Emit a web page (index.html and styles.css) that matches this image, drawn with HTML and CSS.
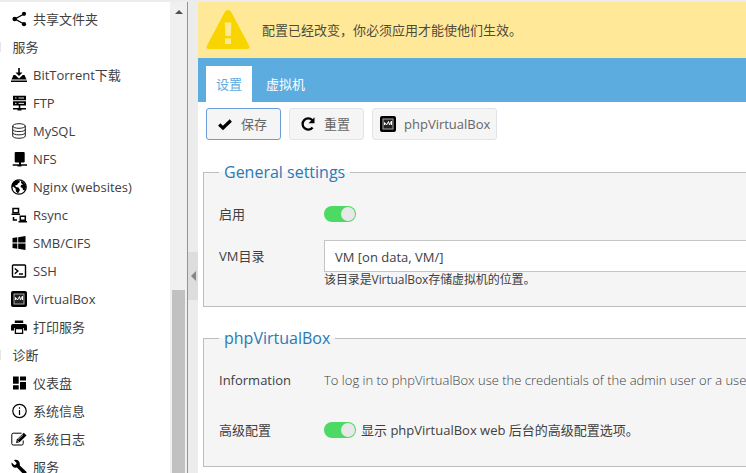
FILE: index.html
```html
<!DOCTYPE html>
<html lang="zh-CN">
<head>
<meta charset="utf-8">
<title>VirtualBox</title>
<link rel="stylesheet" href="styles.css">
</head>
<body>
<svg class="defs" aria-hidden="true">
  <symbol id="vbox" viewBox="0 0 16 16"><rect width="16" height="16" rx="2"/><rect x="3" y="3" width="10" height="10" fill="#222" stroke="#aaa"/><path d="M4.500 9V6.500L6.500 9L8.500 5.500L9.500 9L11.500 5V9" fill="none" stroke="#fff" stroke-width="1"/></symbol>
</svg>
<div class="app">
  <nav class="sidebar">
    <ul class="tree">
      <li class="leaf"><svg viewBox="0 0 16 16"><path d="M13 3L4 8L13 13" fill="none" stroke="#000" stroke-width="1.400"/><circle cx="13" cy="2.800" r="2.100"/><circle cx="3.700" cy="8" r="2.300"/><circle cx="13" cy="13.200" r="2.100"/></svg>共享文件夹</li>
      <li class="group">服务</li>
      <li class="leaf"><svg viewBox="0 0 16 16"><path d="M7.200 1h1.600v4.500h2.700L8 9L4.500 5.500h2.700zM2.500 8h1.700L8 11.500L11.800 8h1.700L15.500 12.500H.5zM0 13.400h16V15H0z"/></svg>BitTorrent下载</li>
      <li class="leaf"><svg viewBox="0 0 16 16"><path d="M2 .8h13v4.400H2zM2 6.200h13v4.400H2zM7.700 10h1.600v3H15v1.500h-4.500v1h-4v-1H2V13h5.700z"/><path d="M4 3h1.500M4 8.400h1.500M7.500 3H13M7.500 8.400H13" stroke="#fff" stroke-width=".9"/></svg>FTP</li>
      <li class="leaf"><svg viewBox="0 0 16 16" class="thin"><ellipse cx="8" cy="3" rx="6.300" ry="2.300"/><path d="M1.700 3v10c0 3 12.600 3 12.600 0V3M1.700 6.300c0 3 12.600 3 12.600 0M1.700 9.600c0 3 12.600 3 12.600 0"/></svg>MySQL</li>
      <li class="leaf"><svg viewBox="0 0 16 16"><rect x="3.700" y="1" width="10" height="10.500" rx="1"/><path d="M8 11h2v2.300h6v1.400h-5.500v.8h-4v-.8H1.700v-1.400H8z"/></svg>NFS</li>
      <li class="leaf"><svg viewBox="0 0 16 16"><circle cx="8" cy="8" r="7.200" fill="#fff" stroke="#000" stroke-width="1.300"/><path d="M2 3.500L5 1.200l3 .3 1 1.500-2 1.500-1 1.500-2 .5 1 1.500 2.500.5L9 11l-2 3.500-2-2-.5-3L2 7.500.9 8.500 1 6zM10 2l3 1.500 2 4-1 4-2-.5-.5-2L9.500 8l.5-2 2-.5L10 4z"/></svg>Nginx (websites)</li>
      <li class="leaf"><svg viewBox="0 0 16 16"><path d="M2 1.500h5.500v4.300H2zM9.300 9.200h5v4.100h-5zM2.500 10v3h3.500" fill="none" stroke="#000" stroke-width="1.500"/><path d="M.5 6.500H9v1.600H.5zM7.500 13.900H16v1.600H7.500z"/></svg>Rsync</li>
      <li class="leaf"><svg viewBox="0 0 16 16"><path d="M1.500 3L6.300 2.300v5.200H1.500zM7.200 2.200L14.500 1v6.500H7.200zM1.500 8.500h4.800v5.200L1.500 13zM7.200 8.500h7.300V15l-7.300-1.200z"/></svg>SMB/CIFS</li>
      <li class="leaf"><svg viewBox="0 0 16 16"><rect x="1.500" y="2" width="13" height="12" rx=".8" fill="none" stroke="#000" stroke-width="1.400"/><path d="M3.800 5.500L6.800 8L3.800 10.700M8 11h4" fill="none" stroke="#000" stroke-width="1.500"/></svg>SSH</li>
      <li class="leaf"><svg><use href="#vbox"/></svg>VirtualBox</li>
      <li class="leaf"><svg viewBox="0 0 16 16"><path d="M3.800 1.500h8.400v2.600H3.800zM2 5h12a2 2 0 0 1 2 2v4.500h-3V9H3v2.500H0V7a2 2 0 0 1 2-2z"/><path d="M4.400 9.500h7.200v4.800H4.400z" fill="#fff" stroke="#000" stroke-width="1.300"/></svg>打印服务</li>
      <li class="group">诊断</li>
      <li class="leaf"><svg viewBox="0 0 16 16"><path d="M2 1.500h5.700v7.200H2zM9 1.500h6v4H9zM2 10.200h5.700v4.300H2zM9 7h6v7.500H9z"/></svg>仪表盘</li>
      <li class="leaf"><svg viewBox="0 0 16 16"><circle cx="8.500" cy="8" r="6.700" fill="none" stroke="#000" stroke-width="1.200"/><path d="M7.900 4.200h1.200v1.500H7.900zM7.900 7h1.200v5H7.900z"/></svg>系统信息</li>
      <li class="leaf"><svg viewBox="0 0 16 16"><path d="M10.500 2.200H2.200Q.8 2.200.8 3.600v9q0 1.400 1.400 1.400h8.600q1.400 0 1.400-1.400V9.500" fill="none" stroke="#000"/><path d="M12.800 1.800L15.500 4.500L8.500 11.200L5 12L5.800 8.500z"/><path d="M7 8.500L12 3.700M6.300 9.500l1.500 1.500" stroke="#fff" stroke-width=".7"/></svg>系统日志</li>
      <li class="leaf"><svg viewBox="0 0 16 16"><path d="M3 1.200L5.600 4 5 5.500 3.300 6 .7 3.500C-.2 6.500 2.500 9.500 6 8.600L12.500 15.200q1.500 1 2.600-.2 1-1.200 0-2.400L8.800 6.500C9.500 3 6.500-.2 3 1.200z"/></svg>服务</li>
    </ul>
    <div class="scrollbar"><span class="arrow-up"></span><span class="thumb"></span></div>
  </nav>
  <div class="splitter"><span class="collapse"></span></div>
  <main class="main">
    <div class="notice">
      <svg viewBox="0 0 44 42"><path d="M22 2Q24 2 25.200 4L43 37.500Q44.500 41 41 41H3Q-.5 41 1 37.500L18.800 4Q20 2 22 2z" fill="#f8d500"/><path d="M18.800 14.500h6.600l-.7 13.500h-5.200zM19 30.500h6V36h-6z" fill="#ffe999"/></svg>
      <span>配置已经改变，你必须应用才能使他们生效。</span>
    </div>
    <div class="tabs"><span class="tab active">设置</span><span class="tab">虚拟机</span></div>
    <div class="toolbar">
      <button class="btn focus"><svg viewBox="0 0 16 16"><path d="M2.200 8.500L6 12L13.800 4.500" fill="none" stroke="#000" stroke-width="3.200"/></svg>保存</button>
      <button class="btn reset"><svg viewBox="0 0 16 16"><path d="M12.300 4.200A5.600 5.600 0 1 0 12.600 11.500" fill="none" stroke="#000" stroke-width="2.300"/><path d="M14.500 1.200V7.300H8.500z"/></svg>重置</button>
      <button class="btn php"><svg><use href="#vbox"/></svg>phpVirtualBox</button>
    </div>
    <fieldset class="general">
      <legend>General settings</legend>
      <div class="row"><label>启用</label><span class="switch"></span></div>
      <div class="row dir"><label>VM目录</label><div class="field"><div class="input">VM [on data, VM/]</div><div class="hint">该目录是VirtualBox存储虚拟机的位置。</div></div></div>
    </fieldset>
    <fieldset class="php-box">
      <legend>phpVirtualBox</legend>
      <div class="row"><label>Information</label><span class="info">To log in to phpVirtualBox use the credentials of the admin user or a use</span></div>
      <div class="row advanced"><label>高级配置</label><span class="switch"></span><span class="desc">显示 phpVirtualBox web 后台的高级配置选项。</span></div>
    </fieldset>
  </main>
</div>
</body>
</html>
```

FILE: styles.css
```css
* { box-sizing: border-box; }
body { margin: 0; overflow: hidden; background: #ececec; color: #404040; font: 13px/20px "Open Sans", "Noto Sans CJK SC", sans-serif; }
.defs { display: none; }
.app { display: flex; width: 746px; height: 473px; padding-top: 2px; overflow: hidden; }
.sidebar { display: flex; flex: 0 0 188px; height: 471px; background: #fff; border-right: 1px solid #5fa2ce; overflow: hidden; }
.tree { flex: 1; margin: 0; padding: 3px 0 0; list-style: none; }
.tree li { display: flex; align-items: center; height: 28px; white-space: nowrap; }
.tree .leaf { padding-left: 11px; }
.leaf svg { width: 16px; height: 16px; margin-right: 6px; flex: none; }
.thin { fill: none; stroke: #222; stroke-width: 1; }
.tree .group { padding-left: 12.500px; background: linear-gradient(#e6e6e6, #e6e6e6) 0 50% / 1px 10px no-repeat; }
.scrollbar { display: flex; flex-direction: column; align-items: center; width: 17px; background: #f0f0f0; }
.arrow-up { margin-top: 8px; border: 4px solid transparent; border-top: 0; border-bottom-color: #505050; }
.thumb { width: 13px; height: 200px; margin-top: 276px; background: #c1c1c1; flex: none; }
.splitter { display: flex; flex: 0 0 10px; background: #ececec; }
.collapse { display: flex; align-items: center; width: 10px; height: 48px; margin-top: 250px; background: #ddd; }
.collapse::before { content: ""; margin-left: 3px; border: 5px solid transparent; border-left: 0; border-right: 5px solid #858585; }
.main { flex: 1; min-width: 0; background: #fff; }
.notice { display: flex; align-items: center; height: 56px; padding-left: 8px; background: #ffe999; color: #4f4b3c; white-space: nowrap; }
.notice svg { width: 44px; height: 42px; margin: -2px 12px 0 0; }
.tabs { display: flex; align-items: flex-end; height: 44px; padding-left: 8px; background: #5cacdf; }
.tab { height: 36px; padding: 0 10px; line-height: 36px; color: #fff; margin-right: 4px; }
.tab.active { background: #fff; color: #5cacdf; }
.toolbar { display: flex; gap: 8px; height: 59px; padding: 6px 0 0 8px; }
.btn { display: flex; align-items: center; height: 32px; padding: 0; border: 1px solid #e0e3e8; border-radius: 3px; background: #f5f5f5; color: #666; font: inherit; white-space: nowrap; }
.btn.focus { width: 75px; padding-left: 10px; border-color: #6d9dd8; }
.btn.reset { width: 75px; padding-left: 10px; }
.btn.php { width: 125px; padding-left: 7px; }
.btn svg { width: 16px; height: 16px; margin-right: 8px; }
fieldset { width: 580px; margin: 0 0 0 5px; padding: 0 0 0 15px; border: 1px solid #bdbdbd; background: #f5f5f5; }
legend { height: 23px; padding: 0 5px; color: #2a7ab5; font-size: 16px; line-height: 23px; }
.general { height: 146px; }
.php-box { height: 140px; margin-top: 20px; }
.row { display: flex; align-items: center; height: 32px; white-space: nowrap; }
.row:first-of-type { margin-top: 14px; }
.row label { flex: 0 0 105px; }
.switch { display: flex; justify-content: flex-end; width: 32px; height: 16px; padding: 1px; border-radius: 8px; background: #4cd964; }
.switch::before { content: ""; width: 14px; height: 14px; border-radius: 50%; background: #e8e8e8; }
.dir { align-items: flex-start; height: 48px; margin-top: 10px; }
.dir label { line-height: 32px; }
.field { flex: 1; }
.input { height: 32px; padding-left: 10px; border: 1px solid #c5c5c5; background: #fff; line-height: 32px; }
.hint { font-size: 12px; line-height: 15px; letter-spacing: -.1px; }
.info { font-weight: 300; }
.advanced { margin-top: 18px; }
.desc { margin-left: 5px; }
```
